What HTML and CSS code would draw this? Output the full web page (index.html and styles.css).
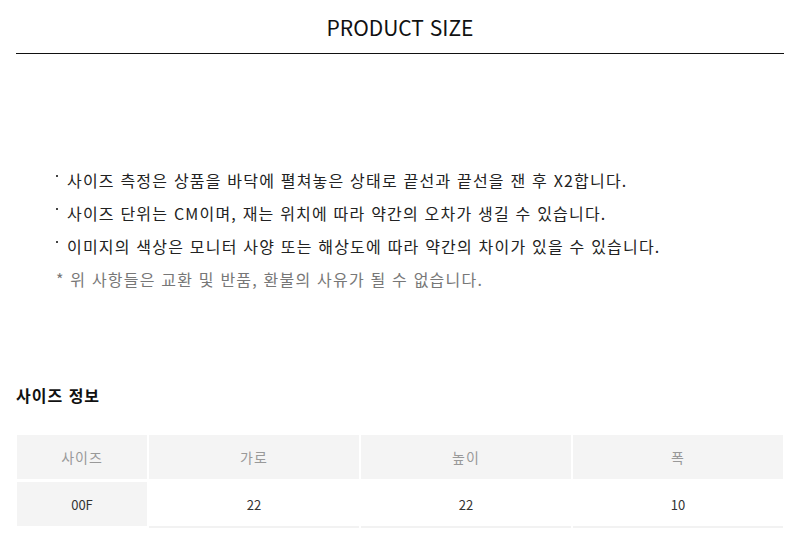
FILE: index.html
```html
<!DOCTYPE html>
<html lang="ko">
<head>
<meta charset="utf-8">
<link rel="stylesheet" href="styles.css">
</head>
<body>
<div class="page">
  <h2 class="title">PRODUCT SIZE</h2>
  <ul class="notes">
    <li class="note"><span class="dot"></span>사이즈 측정은 상품을 바닥에 펼쳐놓은 상태로 끝선과 끝선을 잰 후 X2합니다.</li>
    <li class="note"><span class="dot"></span>사이즈 단위는 CM이며, 재는 위치에 따라 약간의 오차가 생길 수 있습니다.</li>
    <li class="note"><span class="dot"></span>이미지의 색상은 모니터 사양 또는 해상도에 따라 약간의 차이가 있을 수 있습니다.</li>
    <li class="note muted">* 위 사항들은 교환 및 반품, 환불의 사유가 될 수 없습니다.</li>
  </ul>
  <h3 class="subtitle">사이즈 정보</h3>
  <div class="grid">
    <div class="cell head">사이즈</div>
    <div class="cell head">가로</div>
    <div class="cell head">높이</div>
    <div class="cell head">폭</div>
    <div class="cell key">00F</div>
    <div class="cell val">22</div>
    <div class="cell val">22</div>
    <div class="cell val">10</div>
  </div>
</div>
</body>
</html>
```
FILE: styles.css
```css
* { box-sizing: border-box; }
html, body { margin: 0; padding: 0; background: #fff; }
body {
  font-family: "Noto Sans CJK KR", "Noto Sans", sans-serif;
  color: #222;
}
.page {
  width: 768px;
  margin: 0 16px;
}
.title {
  margin: 0;
  height: 54px;
  padding-top: 12px;
  font-size: 21px;
  font-weight: 400;
  line-height: 30px;
  text-align: center;
  color: #111;
  border-bottom: 1px solid #111;
}
.notes {
  list-style: none;
  margin: 0;
  padding: 112px 0 0 40px;
}
.note {
  height: 33px;
  font-size: 16px;
  letter-spacing: 1.2px;
  line-height: 28px;
  color: #222;
  display: flex;
  align-items: flex-start;
}
.dot {
  width: 2px;
  height: 2px;
  background: #444;
  margin: 9px 9px 0 0;
  flex: none;
}
.muted { color: #777; }
.subtitle {
  margin: 0;
  padding-top: 85px;
  font-size: 16px;
  letter-spacing: 1px;
  font-weight: 700;
  line-height: 24px;
  color: #111;
}
.grid {
  margin: 28px 0 0 1px;
  display: grid;
  grid-template-columns: 130px 210px 210px 210px;
  column-gap: 2px;
  row-gap: 3px;
  align-items: start;
}
.cell {
  height: 44px;
  display: flex;
  align-items: center;
  justify-content: center;
  font-size: 13px;
}
.head { background: #f4f4f4; color: #999; font-size: 14px; letter-spacing: 1px; }
.key { background: #f4f4f4; color: #333; }
.val { height: 46px; border-bottom: 2px solid #f2f2f2; color: #333; }
```
